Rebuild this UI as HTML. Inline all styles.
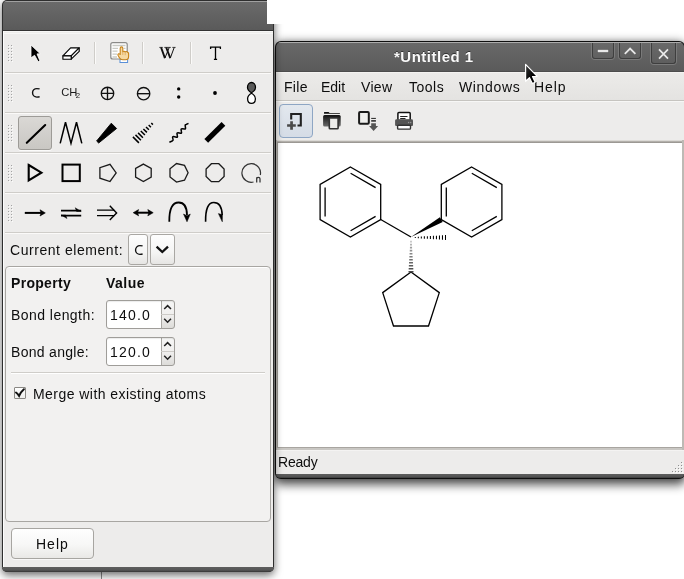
<!DOCTYPE html>
<html><head><meta charset="utf-8">
<style>
*{box-sizing:border-box}
html,body{margin:0;padding:0;width:684px;height:579px;overflow:hidden;background:#fff;font-family:"Liberation Sans",sans-serif;color:#0d0d0d}
#root{position:absolute;left:0;top:0;width:684px;height:579px;overflow:hidden;background:#fff;will-change:transform}
.a{position:absolute}
.t{position:absolute;font-size:14px;line-height:16px;white-space:nowrap}
.sep{position:absolute;height:2px;border-top:1px solid #cfcdc9;border-bottom:1px solid #fbfaf9}
.vsep{position:absolute;width:2px;border-left:1px solid #cfcdc9;border-right:1px solid #fbfaf9}
svg{position:absolute;overflow:visible}
</style></head><body><div id="root">
<!-- RIGHT WINDOW -->
<div class="a" style="left:275px;top:41px;width:410px;height:438px;border-radius:6px 6px 6px 6px;background:#0f0f0f;box-shadow:0 1px 10px rgba(0,0,0,0.6),0 7px 10px rgba(0,0,0,0.45)"></div>
<div class="a" style="left:276px;top:42px;width:408px;height:30px;border-radius:5px 5px 0 0;background:linear-gradient(#ababab 0,#ababab 1px,#686868 1px,#5a5a5a 29px,#4d4d4d 29px)"></div>
<div class="a" style="left:276px;top:72px;width:410px;height:402px;background:#edeceb;border-top:1px solid #f5f4f2"></div>
<div class="a" style="left:276px;top:474px;width:408px;height:4px;border-radius:0 0 5px 5px;background:linear-gradient(#5e5e5e,#555 60%,#3a3a3a)"></div>
<div class="a" style="left:276px;top:72px;width:410px;height:28px;background:linear-gradient(#f4f3f1 0,#f4f3f1 1px,#ecebe9 1px,#e4e3e1)"></div>
<div class="a" style="left:276px;top:100px;width:410px;height:1px;background:#c6c4c0"></div>
<div class="a" style="left:276px;top:101px;width:410px;height:1px;background:#f7f7f6"></div>
<!-- title -->
<div class="t" style="left:394px;top:48px;font-size:15px;line-height:17px;font-weight:bold;color:#fafafa;letter-spacing:0.5px;text-shadow:0 -1px 0 rgba(0,0,0,0.5)">*Untitled 1</div>
<!-- wm buttons -->
<div class="a" style="left:591px;top:43px;width:24px;height:17px;border:1px solid #7a7a7a;border-top:0;border-radius:0 0 4px 4px"></div>
<div class="a" style="left:592px;top:43px;width:22px;height:16px;border:1px solid #3e3e3e;border-top:0;border-radius:0 0 3px 3px"></div>
<div class="a" style="left:618px;top:43px;width:24px;height:17px;border:1px solid #7a7a7a;border-top:0;border-radius:0 0 4px 4px"></div>
<div class="a" style="left:619px;top:43px;width:22px;height:16px;border:1px solid #3e3e3e;border-top:0;border-radius:0 0 3px 3px"></div>
<div class="a" style="left:650px;top:43px;width:27px;height:22px;border:1px solid #7a7a7a;border-top:0;border-radius:0 0 4px 4px"></div>
<div class="a" style="left:651px;top:43px;width:25px;height:21px;border:1px solid #3e3e3e;border-top:0;border-radius:0 0 3px 3px"></div>
<svg width="684" height="579" style="left:0;top:0"><g fill="none" stroke="#e8e8e8">
<path d="M597.8 51 H608.2" stroke-width="2.3"/>
<path d="M624.8 53.8 L630.1 48.5 L635.4 53.8" stroke-width="1.8"/>
<path d="M659 49.4 L668 58.6 M668 49.4 L659 58.6" stroke-width="1.7"/>
</g></svg>
<!-- menu -->
<div class="t" style="left:284px;top:79px;letter-spacing:0.3px">File</div>
<div class="t" style="left:321px;top:79px">Edit</div>
<div class="t" style="left:361px;top:79px;letter-spacing:0.3px">View</div>
<div class="t" style="left:409px;top:79px;letter-spacing:0.5px">Tools</div>
<div class="t" style="left:459px;top:79px;letter-spacing:0.65px">Windows</div>
<div class="t" style="left:534px;top:79px;letter-spacing:0.9px">Help</div>
<!-- toolbar -->
<div class="a" style="left:279px;top:104px;width:34px;height:34px;border:1px solid #8ea6c4;border-radius:4px;background:linear-gradient(#e3e8ee,#d5dce6)"></div>
<svg width="684" height="579" style="left:0;top:0">
<defs>
<linearGradient id="g1" x1="0" y1="0" x2="0" y2="1"><stop offset="0" stop-color="#111"/><stop offset="1" stop-color="#6a6a6a"/></linearGradient>
</defs>
<!-- new -->
<path d="M291.2 119.5 V114 H300.8 V125.5 H297.5" fill="none" stroke="#222" stroke-width="2.1"/>
<path d="M287.1 124.2 H295.8 V126.7 H287.1 Z M290.2 121.3 H292.9 V129.8 H290.2 Z" fill="#4a4a4a"/>
<!-- open -->
<path d="M324 113.8 L324 112.3 Q324 111.9 324.6 111.9 L328.6 111.9 L329.6 113 L339.9 113 L339.9 113.8 Z" fill="#111"/>
<rect x="323.1" y="115" width="17.6" height="11.4" rx="1.5" fill="url(#g1)"/>
<rect x="329.3" y="118" width="8.8" height="10.8" rx="0.8" fill="#ececea" stroke="#333" stroke-width="1.6"/>
<!-- save -->
<rect x="359.1" y="111.9" width="9.7" height="11.9" rx="1" fill="#efefed" stroke="#1a1a1a" stroke-width="2"/>
<path d="M371.2 118.4 H375.9" stroke="#222" stroke-width="1"/>
<path d="M371.2 120.9 H375.9" stroke="#222" stroke-width="1.5"/>
<path d="M371.2 123.3 H375.9 V126 H378.1 L373.6 130.9 L369.1 126 H371.2 Z" fill="#555"/>
<!-- print -->
<rect x="397.9" y="112.6" width="12.3" height="8" rx="1" fill="#fff" stroke="#111" stroke-width="1.5"/>
<path d="M400.2 116.5 H407.5 M400.2 118.5 H405.5" stroke="#222" stroke-width="1"/>
<path d="M396.6 119.3 H411.6 Q413 119.3 413 120.7 V125 Q413 126 412 126 H396.1 Q395.1 126 395.1 125 V120.7 Q395.1 119.3 396.6 119.3 Z" fill="#555"/>
<circle cx="408.6" cy="122.5" r="0.7" fill="#999"/><circle cx="410.7" cy="122.5" r="0.7" fill="#999"/>
<rect x="397.6" y="125.3" width="12.9" height="3.8" rx="0.8" fill="#fff" stroke="#333" stroke-width="1.4"/>
</svg>
<!-- canvas frame -->
<div class="a" style="left:276px;top:140px;width:408px;height:310px;background:linear-gradient(90deg,#bdbab5 0,#bdbab5 1px,transparent 1px,transparent 406px,#bdbab5 406px),linear-gradient(#dcdad6 0,#dcdad6 1px,#b3b0ab 1px,#b3b0ab 2px,#96938e 2px,#a19e99 3px,#a19e99 307px,#a8a5a0 307px,#a8a5a0 308px,#c9c7c3 308px)"></div>
<div class="a" style="left:278px;top:143px;width:404px;height:304px;background:#fff"></div>
<div class="a" style="left:276px;top:450px;width:408px;height:1px;background:#f4f3f2"></div>
<!-- status -->
<div class="t" style="left:278px;top:454px;letter-spacing:-0.2px">Ready</div>
<svg width="684" height="579" style="left:0;top:0"><g fill="#fcfcfb" id="grw"><rect x="682" y="463" width="1" height="1"/><rect x="679" y="466" width="1" height="1"/><rect x="682" y="466" width="1" height="1"/><rect x="676" y="469" width="1" height="1"/><rect x="679" y="469" width="1" height="1"/><rect x="682" y="469" width="1" height="1"/><rect x="673" y="472" width="1" height="1"/><rect x="676" y="472" width="1" height="1"/><rect x="679" y="472" width="1" height="1"/><rect x="682" y="472" width="1" height="1"/></g>
<g fill="#8f8f8f"><rect x="681" y="462" width="1" height="1"/><rect x="678" y="465" width="1" height="1"/><rect x="681" y="465" width="1" height="1"/><rect x="675" y="468" width="1" height="1"/><rect x="678" y="468" width="1" height="1"/><rect x="681" y="468" width="1" height="1"/><rect x="672" y="471" width="1" height="1"/><rect x="675" y="471" width="1" height="1"/><rect x="678" y="471" width="1" height="1"/><rect x="681" y="471" width="1" height="1"/></g></svg>
<svg width="684" height="579" style="left:0;top:0"><defs><linearGradient id="hg" gradientUnits="userSpaceOnUse" x1="0" y1="241" x2="0" y2="272"><stop offset="0" stop-color="#b5b5b5"/><stop offset="1" stop-color="#444"/></linearGradient></defs>
<g fill="none" stroke="#000" stroke-width="1.3" stroke-linecap="butt" stroke-linejoin="miter">
<!-- left benzene -->
<path d="M350.4 167 L380.7 184.5 L380.7 219.5 L350.4 237 L320.1 219.5 L320.1 184.5 Z"/>
<path d="M325.1 187.4 V216.6 M350.6 173.2 L375.6 187.6 M350.6 230.8 L375.6 216.4"/>
<!-- right benzene -->
<path d="M471.6 167 L501.9 184.5 L501.9 219.5 L471.6 237 L441.3 219.5 L441.3 184.5 Z"/>
<path d="M446.3 187.4 V216.6 M471.8 173.2 L496.8 187.6 M471.8 230.8 L496.8 216.4"/>
<!-- bond left benzene to C0 -->
<path d="M380.7 219.5 L411 237"/>
<!-- cyclopentane -->
<path d="M411 272 L439.3 292.6 L428.5 326 L393.5 326 L382.7 292.6 Z"/>
</g>
<!-- wedge -->
<path d="M411 237 L439.9 217.3 L442.7 221.9 Z" fill="#000"/>
<!-- hash right -->
<g stroke="#000" stroke-width="1.05">
<path d="M415.30 236.90 V238.10 M418.32 236.72 V238.28 M421.34 236.54 V238.46 M424.36 236.36 V238.64 M427.38 236.18 V238.82 M430.40 236.00 V239.00 M433.42 235.82 V239.18 M436.44 235.64 V239.36 M439.46 235.46 V239.54 M442.48 235.28 V239.72 M445.50 235.10 V239.90"/>
<path stroke="url(#hg)" stroke-width="1.6" d="M410.30 241.60 H411.70 M410.12 244.62 H411.88 M409.94 247.64 H412.06 M409.76 250.66 H412.24 M409.58 253.68 H412.42 M409.40 256.70 H412.60 M409.22 259.72 H412.78 M409.04 262.74 H412.96 M408.86 265.76 H413.14 M408.68 268.78 H413.32 M408.50 271.80 H413.50"/>
</g>
</svg>
<!-- LEFT WINDOW -->
<div class="a" style="left:101px;top:570px;width:1px;height:9px;background:#8a8a8a"></div>
<div class="a" style="left:2px;top:0;width:272px;height:572px;border-radius:5px;background:#2e2e2e;box-shadow:0 3px 9px rgba(0,0,0,0.6)"></div>
<div class="a" style="left:3px;top:1px;width:270px;height:30px;border-radius:4px 4px 0 0;background:linear-gradient(#a0a0a0 0,#a0a0a0 1px,#6a6a6a 1px,#5a5a5a 29px,#333 29px)"></div>
<div class="a" style="left:3px;top:31px;width:270px;height:536px;background:linear-gradient(#f7f7f6 0,#f7f7f6 1px,#eeedeb 1px,#eeedeb 2px,#f6f6f5 2px,#f6f6f5 3px,#edeceb 3px);border-left:1px solid #fdfdfd"></div>
<div class="a" style="left:2px;top:567px;width:272px;height:5px;border-radius:0 0 5px 5px;background:linear-gradient(#5e5e5e,#575757 60%,#343434)"></div>
<div class="a" style="left:267px;top:0;width:30px;height:24px;background:#fff"></div>
<!-- LEFT TOOLBOX CONTENT -->
<div class="sep" style="left:5px;top:72px;width:266px"></div>
<div class="sep" style="left:5px;top:112px;width:266px"></div>
<div class="sep" style="left:5px;top:152px;width:266px"></div>
<div class="sep" style="left:5px;top:192px;width:266px"></div>
<div class="sep" style="left:5px;top:232px;width:266px"></div>
<div class="vsep" style="left:94px;top:42px;height:22px"></div>
<div class="vsep" style="left:142px;top:42px;height:22px"></div>
<div class="vsep" style="left:190px;top:42px;height:22px"></div>
<div class="a" style="left:18px;top:116px;width:34px;height:34px;border:1px solid #9d9b97;border-radius:3px;background:linear-gradient(#dad8d5,#c9c7c3);box-shadow:0 1px 0 #fbfbfa"></div>
<svg width="684" height="579" viewBox="0 0 684 579" style="left:0;top:0">

<g fill="#fbfbfa"><use href="#gr" x="1" y="1"/><use href="#gr" x="1" y="41"/><use href="#gr" x="1" y="81"/><use href="#gr" x="1" y="121"/><use href="#gr" x="1" y="161"/></g>
<g fill="#a4a4a4">
<path id="gr" d="M8 45h1v1h-1zM11 45h1v1h-1zM8 48h1v1h-1zM11 48h1v1h-1zM8 51h1v1h-1zM11 51h1v1h-1zM8 54h1v1h-1zM11 54h1v1h-1zM8 57h1v1h-1zM11 57h1v1h-1zM8 60h1v1h-1zM11 60h1v1h-1z"/>
<use href="#gr" y="40"/><use href="#gr" y="80"/><use href="#gr" y="120"/><use href="#gr" y="160"/>
</g>
<!-- row1 -->
<path d="M31 45 L40.2 53.7 L37 53.9 L39.8 60.6 L38.2 61.8 L34.6 55.3 L31 57.8 Z" fill="#000" stroke="#fff" stroke-width="0.8" stroke-linejoin="round"/>
<g fill="#fff" stroke="#000" stroke-width="1.15" stroke-linejoin="round">
<path d="M62.9 55.8 L70.6 47.8 L79.2 47.8 L71.2 55.8 Z"/>
<path d="M71.2 55.8 L79.2 47.8 L79.2 51.4 L71.2 59.2 Z"/>
<rect x="62.9" y="55.8" width="8.3" height="3.4"/>
</g>
<rect x="110.8" y="42.6" width="16.4" height="16.4" rx="2" fill="#fff" stroke="#8a8a88" stroke-width="1.2"/>
<g stroke="#c9cbc5" stroke-width="1.3"><path d="M112.5 45.5h13M112.5 48.3h5.5M123.5 48.3h2M112.5 51.2h5M112.5 54.1h4.5M112.5 57h4.5"/></g>
<rect x="120" y="59.5" width="7.6" height="3" fill="#fff" stroke="#5b8fd6" stroke-width="1"/>
<path d="M120.2 54 V48.2 Q120.2 46.9 121.5 46.9 Q122.8 46.9 122.8 48.2 V51.8 Q123.1 51.2 124 51.2 Q124.9 51.2 125.2 52 Q125.5 51.5 126.4 51.5 Q127.3 51.5 127.6 52.4 Q128.6 52.4 128.6 53.6 V56.5 Q128.6 59.8 125.5 59.8 H122.8 Q120.5 59.8 119.2 57.5 L118 55.3 Q117.6 54.2 118.6 53.8 Q119.4 53.5 120.2 54.5 Z" fill="#f6d9a2" stroke="#c8841a" stroke-width="1.1" stroke-linejoin="round"/>
<path d="M122.8 52 V55 M125.2 52.2 V55.2" stroke="#d9a050" stroke-width="0.7"/>
<g stroke="#111" fill="none">
<path d="M161.1 47.5 L164.9 58.1 M166.2 47.5 L170.3 58.1" stroke-width="1.9"/>
<path d="M164.9 58.1 L169.2 47.5 M170.3 58.1 L174.2 47.5" stroke-width="1"/>
<path d="M159.3 47.4 H162.8 M164.3 47.4 H170.8 M172.3 47.4 H175.6" stroke-width="0.8"/>
</g>
<path d="M210.6 49 V47.2 H220.4 V49 M215.5 47.2 V59.3 M213.9 59.3 H217.1" fill="none" stroke="#000" stroke-width="1.3"/>
<!-- row2 -->
<path d="M39.6 88.9 Q38.4 88.6 36.8 88.6 A4.25 4.25 0 0 0 36.8 97.1 Q38.4 97.1 39.6 96.8" fill="none" stroke="#111" stroke-width="1.4"/>
<text x="61.2" y="96" font-size="11.2" fill="#1a1a1a">CH</text>
<text x="75.8" y="97.9" font-size="7.8" fill="#1a1a1a">2</text>
<g fill="none" stroke="#111" stroke-width="1.35">
<circle cx="107.5" cy="93.4" r="6.2"/><path d="M101.3 93.4h12.4M107.5 87.2v12.4"/>
<circle cx="143.6" cy="93.7" r="6.2"/><path d="M137.4 93.7h12.4"/>
</g>
<g fill="#000"><circle cx="178.7" cy="88.9" r="1.7"/><circle cx="178.7" cy="97" r="1.7"/><circle cx="215" cy="93" r="1.9"/></g>
<g stroke="#000" stroke-width="1.3" stroke-linejoin="round">
<path d="M251.5 92.8 C249.3 91.5 247.5 89.6 247.5 87.2 C247.5 84.5 249.3 82.5 251.5 82.5 C253.7 82.5 255.5 84.5 255.5 87.2 C255.5 89.6 253.7 91.5 251.5 92.8 Z" fill="#5a5a5a"/>
<path d="M251.5 93.2 C253.7 94.5 255.4 96.4 255.4 98.7 C255.4 101.5 253.7 103.3 251.5 103.3 C249.3 103.3 247.6 101.5 247.6 98.7 C247.6 96.4 249.3 94.5 251.5 93.2 Z" fill="#fff"/>
</g>
<!-- row3 -->
<path d="M26.8 142.8 L45.2 125" stroke="#000" stroke-width="2.1" stroke-linecap="round"/>
<path d="M60.2 143.4 L65.5 122.3 L71 143.4 L76.5 122.3 L81.8 143.4" fill="none" stroke="#000" stroke-width="1.5" stroke-linejoin="miter"/>
<path d="M96.6 141 L111.3 123.2 L116.6 128.5 L98.7 143 Z" fill="#000" stroke="#000" stroke-width="0.9" stroke-linejoin="round"/>
<path d="M132.9 136.9 L138.9 142.9 M135.5 134.9 L140.9 140.3 M138.1 132.9 L142.9 137.7 M140.8 130.9 L144.9 135.1 M143.4 129.0 L146.9 132.4 M146.0 127.0 L148.9 129.8 M148.7 125.0 L150.9 127.2 M151.3 123.0 L152.9 124.6" stroke="#000" stroke-width="1.5"/>
<path d="M169.4 142.2 L172.2 141 Q173.5 140.5 173 139 L172.6 137.6 Q172.4 136.5 173.6 136.6 L176.5 137.2 Q177.8 137.3 177.4 136 L177 133.8 Q176.8 132.6 178 132.7 L180.6 133.2 Q181.8 133.4 181.5 132 L181.1 129.8 Q180.9 128.6 182.1 128.7 L184.6 129.1 Q185.8 129.2 185.5 128 L185.2 125.6 Q185 124.5 186.2 124.4 L188.5 123.4" fill="none" stroke="#000" stroke-width="1.5"/>
<path d="M204.4 138.9 L221.6 121.9 L225.3 125.7 L208.1 142.8 Z" fill="#000"/>
<!-- row4 -->
<g fill="none" stroke="#000" stroke-linejoin="miter">
<path d="M28.7 165 L41.4 172.7 L28.7 180.4 Z" stroke-width="2.1"/>
<rect x="62.5" y="164.6" width="17.3" height="16.5" stroke-width="2"/>
</g>
<g fill="none" stroke="#1a1a1a" stroke-width="1.3" stroke-linejoin="miter">
<path d="M116.2 172.9 L110.0 181.5 L99.9 178.2 L99.9 167.6 L110.0 164.3 Z"/>
<path d="M143.4 164.1 L151.2 168.5 L151.2 177 L143.4 181.5 L135.6 177 L135.6 168.5 Z"/>
<path d="M188.1 172.8 L184.5 180.2 L176.5 182.1 L170.0 176.9 L170.0 168.7 L176.5 163.5 L184.5 165.4 Z"/>
<path d="M211.4 163.7 L218.8 163.7 L224.1 169.0 L224.1 176.4 L218.8 181.7 L211.4 181.7 L206.1 176.4 L206.1 169.0 Z"/>
</g>
<path d="M253.5 182 A 9.3 9.3 0 1 1 260.3 175" fill="none" stroke="#333" stroke-width="1.2"/>
<path d="M256.7 182.6 V177.2 M256.7 178.4 Q257.2 177.4 258.4 177.4 Q260 177.4 260 178.8 V182.6" fill="none" stroke="#333" stroke-width="1.25"/>
<!-- row5 -->
<g fill="#000" stroke="#000">
<path d="M24.8 212.9 H41" stroke-width="2"/>
<path d="M45.3 212.9 L40 209.8 L41.2 212.9 L40 216 Z" stroke-width="0.6"/>
<path d="M61 210.7 H81.2 M61 215.6 H81.2" stroke-width="1.8"/>
<path d="M81.2 211.4 L75.2 207.7 L76.6 211.4 Z M61 214.9 L67 218.6 L65.6 214.9 Z" stroke-width="0.4"/>
<path d="M97 210.2 H114.2 M97 215.6 H114.2" stroke-width="1.3"/>
<path d="M109.8 205.8 L116.6 212.9 L109.8 219.9" fill="none" stroke-width="1.4"/>
<path d="M137 212.7 H149.5" stroke-width="2"/>
<path d="M133.2 212.7 L138.6 209.6 L137.5 212.7 L138.6 215.8 Z M153.2 212.7 L147.8 209.6 L148.9 212.7 L147.8 215.8 Z" stroke-width="0.6"/>
<path d="M169.3 221.8 Q169 202.5 178.7 202.5 Q186.8 202.5 187 215" fill="none" stroke-width="1.8"/>
<path d="M183.5 214 L187 221.8 L190.3 214 L187 215.8 Z" stroke-width="0.5"/>
<path d="M205.6 221.8 Q205.3 202.5 213.8 202.5 Q221.8 202.5 222.2 215" fill="none" stroke-width="1.6"/>
<path d="M218.4 213.6 L222.3 221.8 L222.4 214.8 Z" stroke-width="0.5"/>
</g>
</svg>
<!-- current element -->
<div class="t" style="left:10px;top:242px;letter-spacing:0.55px">Current element:</div>
<div class="a" style="left:128px;top:234px;width:20px;height:31px;border:1px solid #a9a7a3;border-radius:3px;background:linear-gradient(#fdfdfd,#f5f5f4 60%,#e6e5e3)"></div>
<div class="a" style="left:150px;top:234px;width:25px;height:31px;border:1px solid #a9a7a3;border-radius:3px;background:linear-gradient(#fdfdfd,#f5f5f4 60%,#e6e5e3)"></div>
<svg width="684" height="579" style="left:0;top:0"><path d="M142.6 245.9 Q141.4 245.6 139.9 245.6 A4.35 4.35 0 0 0 139.9 254.3 Q141.4 254.3 142.6 254" fill="none" stroke="#111" stroke-width="1.35"/></svg>
<svg width="684" height="579" style="left:0;top:0"><path d="M156.6 246.6 L162.3 252 L168 246.6" fill="none" stroke="#111" stroke-width="2.3"/></svg>
<!-- panel -->
<div class="a" style="left:5px;top:266px;width:266px;height:256px;border:1px solid #a8a6a2;border-radius:4px;background:#f2f1f0;box-shadow:inset 0 1px 0 #fff"></div>
<div class="t" style="left:11px;top:275px;font-weight:bold;letter-spacing:0.3px">Property</div>
<div class="t" style="left:106px;top:275px;font-weight:bold;letter-spacing:0.5px">Value</div>
<div class="t" style="left:11px;top:307px;letter-spacing:0.45px">Bond length:</div>
<div class="t" style="left:11px;top:344px;letter-spacing:0.3px">Bond angle:</div>
<!-- spin 1 -->
<div class="a" style="left:106px;top:300px;width:69px;height:29px;border:1px solid #9f9d99;border-radius:3px;background:linear-gradient(90deg,#fff 0,#fff 54px,#a9a7a3 54px,#a9a7a3 55px,transparent 55px),linear-gradient(#f6f6f5,#f1f0ef 50%,#dddcd9);box-shadow:inset 0 1px 1px rgba(0,0,0,0.08)"></div>
<div class="a" style="left:161px;top:314px;width:13px;height:1px;background:#cdcbc7"></div>
<div class="t" style="left:110px;top:307px;letter-spacing:1.2px">140.0</div>
<!-- spin 2 -->
<div class="a" style="left:106px;top:337px;width:69px;height:29px;border:1px solid #9f9d99;border-radius:3px;background:linear-gradient(90deg,#fff 0,#fff 54px,#a9a7a3 54px,#a9a7a3 55px,transparent 55px),linear-gradient(#f6f6f5,#f1f0ef 50%,#dddcd9);box-shadow:inset 0 1px 1px rgba(0,0,0,0.08)"></div>
<div class="a" style="left:161px;top:351px;width:13px;height:1px;background:#cdcbc7"></div>
<div class="t" style="left:110px;top:344px;letter-spacing:1.2px">120.0</div>
<svg width="684" height="579" style="left:0;top:0"><g fill="none" stroke="#222" stroke-width="1.5">
<path d="M164.2 309 L167.6 305.6 L171 309 M164.2 318.8 L167.6 322.2 L171 318.8"/>
<path d="M164.2 346 L167.6 342.6 L171 346 M164.2 355.8 L167.6 359.2 L171 355.8"/>
</g></svg>
<div class="a" style="left:11px;top:372px;width:254px;height:2px;border-top:1px solid #cfcdc9;border-bottom:1px solid #fff"></div>
<!-- checkbox -->
<div class="a" style="left:14px;top:387px;width:12px;height:12px;border:1px solid #8a8884;border-radius:1px;background:linear-gradient(#fff,#eeeeec)"></div>
<svg width="684" height="579" style="left:0;top:0"><path d="M16 392.5 Q17.6 393.6 19.1 395.9 Q21 391.6 23.9 389.2" fill="none" stroke="#111" stroke-width="2" stroke-linecap="round"/></svg>
<div class="t" style="left:33px;top:386px;letter-spacing:0.45px">Merge with existing atoms</div>
<!-- help button -->
<div class="a" style="left:11px;top:528px;width:83px;height:31px;border:1px solid #a7a5a1;border-radius:4px;background:linear-gradient(#fefefe,#f7f7f6 55%,#e9e8e6);box-shadow:0 1px 0 rgba(255,255,255,0.6)"></div>
<div class="t" style="left:36px;top:536px;letter-spacing:1px">Help</div>
<svg width="684" height="579" style="left:0;top:0">
<defs><linearGradient id="cg" x1="0" y1="0" x2="1" y2="1"><stop offset="0" stop-color="#3a3a3a"/><stop offset="0.6" stop-color="#000"/></linearGradient></defs>
<path d="M525.6 64.4 L525.6 81.3 L529.5 77.7 L532.3 83.5 L535.2 82.2 L532.5 76.6 L537.2 76.4 Z" fill="url(#cg)" stroke="#fff" stroke-width="1.2" stroke-linejoin="round"/>
</svg>
</div></body></html>
